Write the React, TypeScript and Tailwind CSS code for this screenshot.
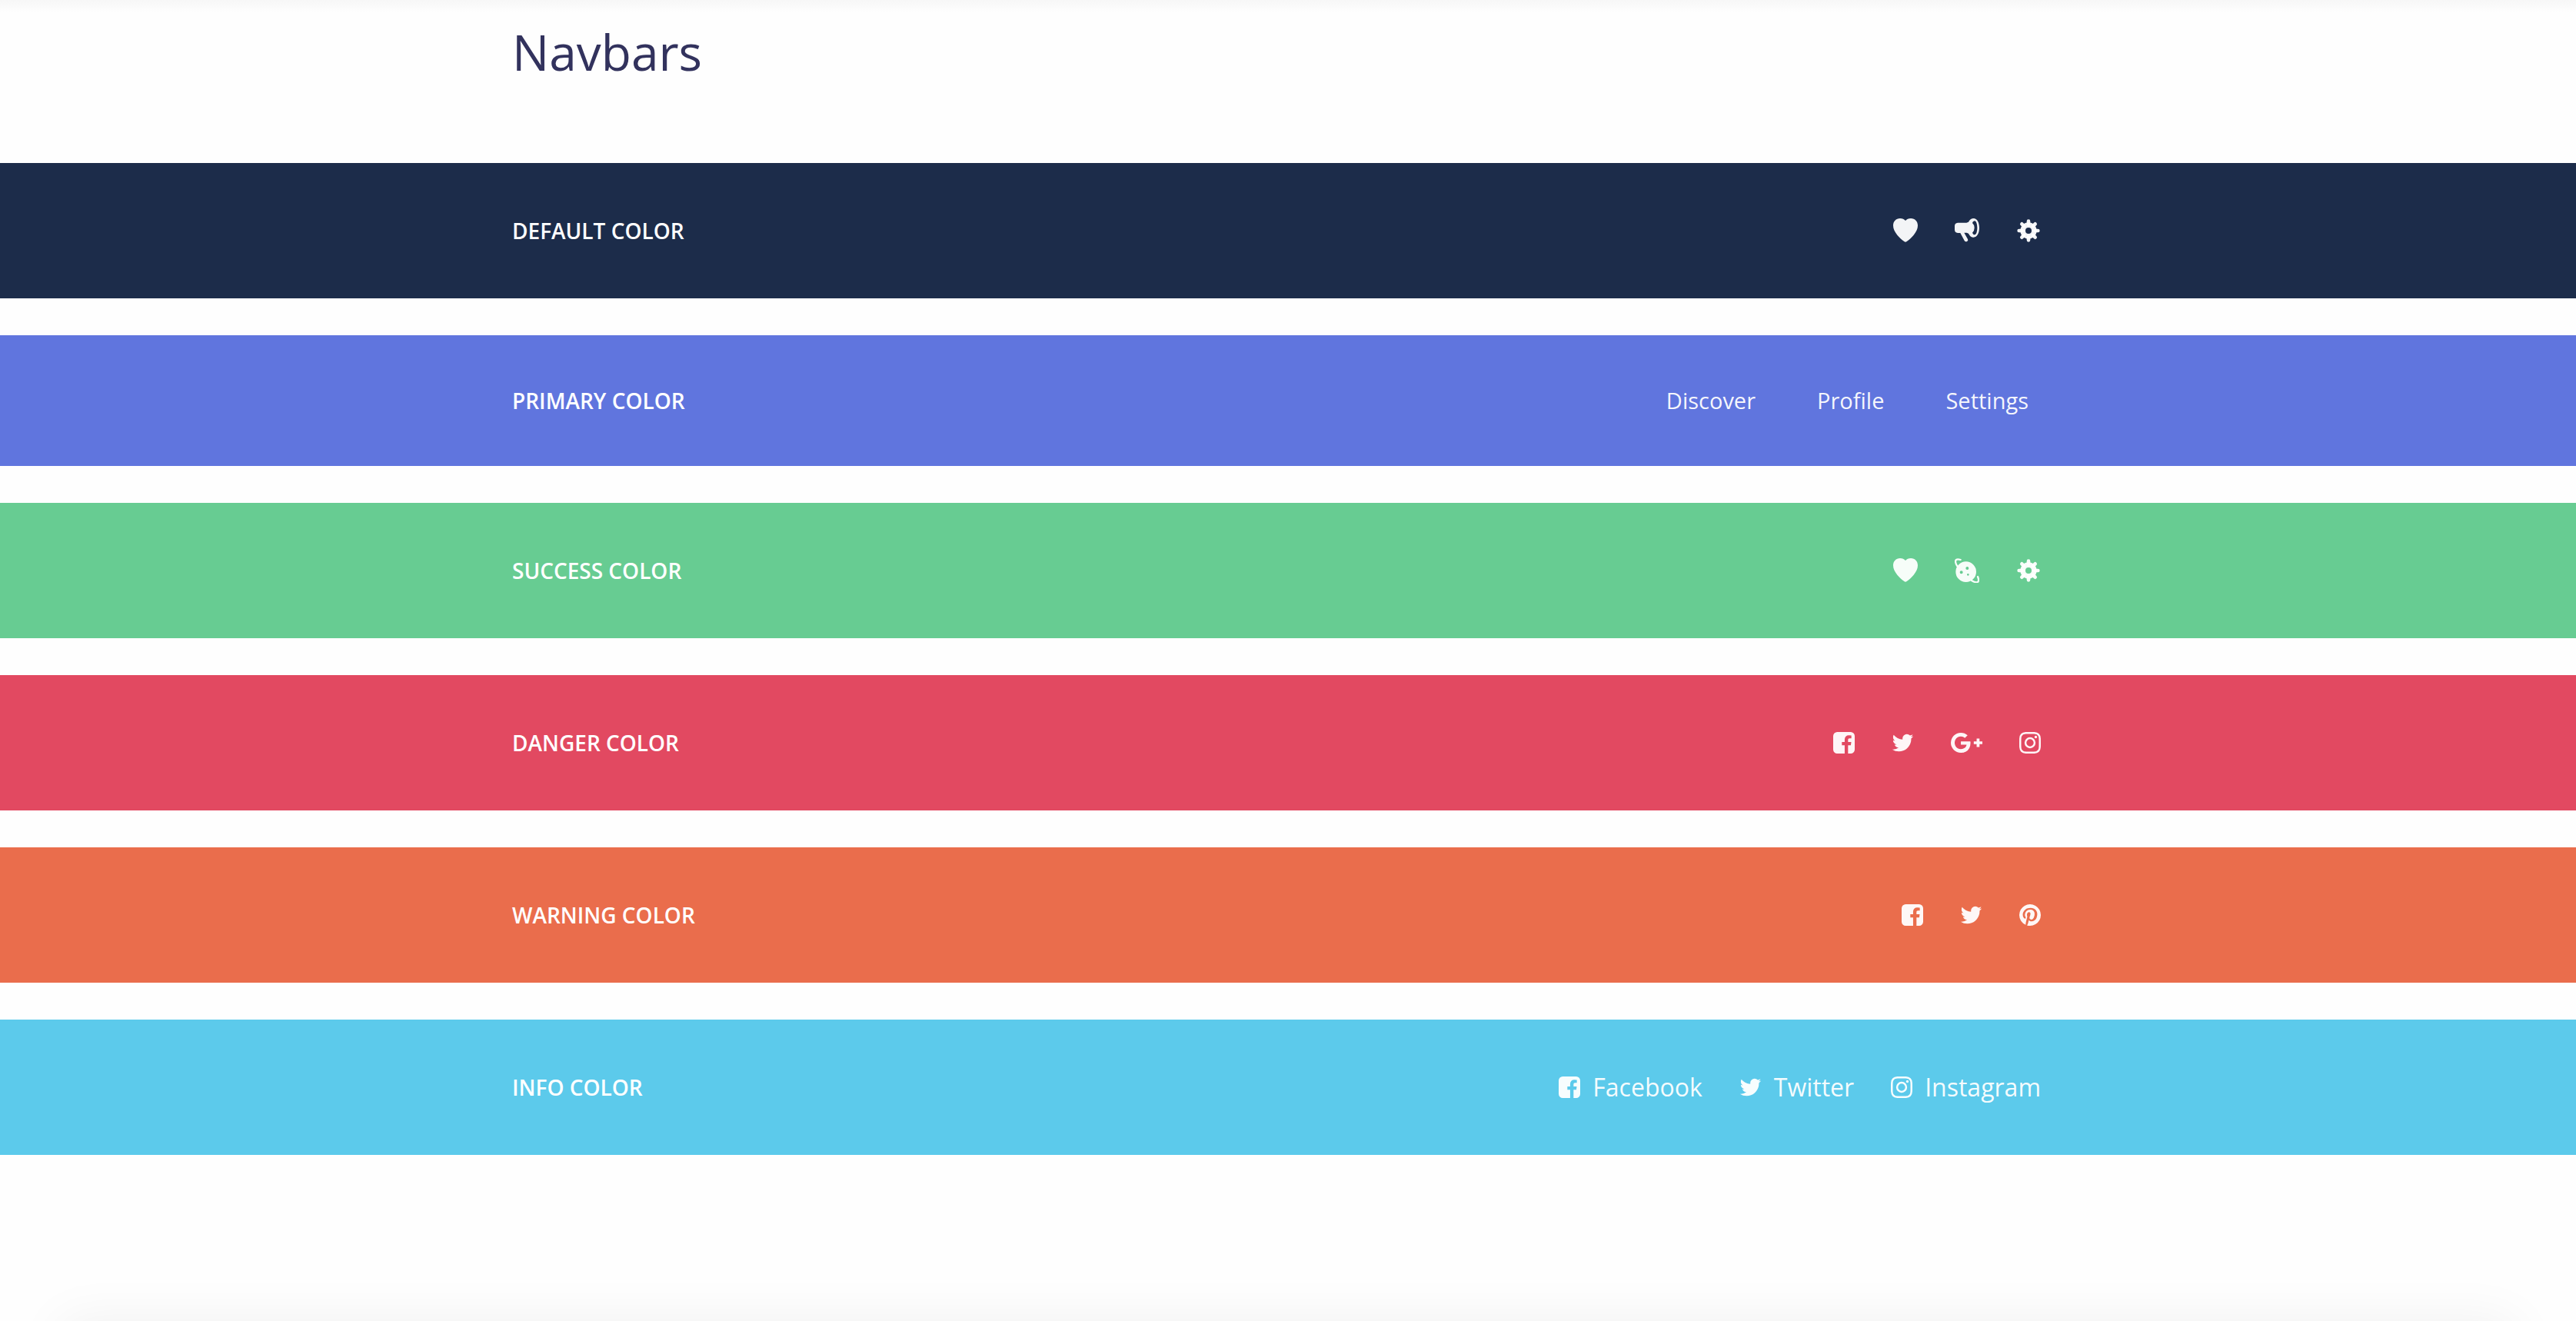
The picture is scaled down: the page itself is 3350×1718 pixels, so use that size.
import type { ReactNode } from "react";

function HeartIcon() {
  return (
    <svg viewBox="0 0 96 96" className="h-8 w-8" fill="currentColor" aria-hidden="true">
      <path d="M48 9C43 3 36 0 27 0 11 0 0 12 0 28c0 13 6 25 16 37 8 9 17 18 27 25q5 4 10 0c10-7 19-16 27-25 10-12 16-24 16-37C96 12 85 0 69 0 60 0 53 3 48 9z" />
    </svg>
  );
}

function MegaphoneIcon() {
  return (
    <svg viewBox="0 0 96 96" className="h-8 w-8" fill="currentColor" aria-hidden="true">
      <path
        fillRule="evenodd"
        d="M74 0c13 0 22 16 22 37S87 74 74 74c-9 0-16-6-20-15l-7-3H37l14 25q3 6-3 9t-10-3L22 57H12Q0 55 0 44V29Q0 18 12 17h34l8-3C58 6 65 0 74 0zM78 10c-4 0-7 3-9 8q8 7 8 19t-8 19c2 5 5 8 9 8 6 0 10-12 10-27S84 10 78 10z"
      />
    </svg>
  );
}

function GearIcon() {
  return (
    <svg viewBox="-48 -48 96 96" className="h-8 w-8" aria-hidden="true">
      <circle r="22" fill="none" stroke="currentColor" strokeWidth="20" />
      <g stroke="currentColor" strokeWidth="14" strokeLinecap="round">
        <path d="M0-25V-37M0 25V37M-25 0H-37M25 0H37M-18-18l-8-8M18 18l8 8M-18 18l-8 8M18-18l8-8" />
      </g>
    </svg>
  );
}

function PlanetIcon() {
  return (
    <svg viewBox="0 0 96 96" className="h-8 w-8" aria-hidden="true">
      <path
        fill="currentColor"
        fillRule="evenodd"
        d="M44 13a40 40 0 1 1 0 80a40 40 0 1 1 0-80zM26 49a6 6 0 1 0 0 12a6 6 0 1 0 0-12zM49 33a6 6 0 1 0 0 12a6 6 0 1 0 0-12zM52 60a4 4 0 1 0 0 8a4 4 0 1 0 0-8z"
      />
      <path
        fill="none"
        stroke="currentColor"
        strokeWidth="7"
        strokeLinecap="round"
        d="M10 31C3 21 1 10 6 6q5-4 17 0M66 87c12 7 21 9 25 5q5-5-1-20"
      />
    </svg>
  );
}

function FacebookIcon() {
  return (
    <svg viewBox="128 128 1536 1536" className="h-7 w-7" fill="currentColor" aria-hidden="true">
      <path d="M1376 128q119 0 203.5 84.5t84.5 203.5v960q0 119-84.5 203.5t-203.5 84.5h-188v-595h199l30-232h-229v-148q0-56 23.5-84t91.5-28l122-1v-207q-63-9-178-9-136 0-217.5 80t-81.5 226v171h-200v232h200v595h-532q-119 0-203.5-84.5t-84.5-203.5v-960q0-119 84.5-203.5t203.5-84.5h960z" />
    </svg>
  );
}

function TwitterIcon() {
  return (
    <svg viewBox="64 128 1664 1536" className="h-7 w-[29px]" fill="currentColor" aria-hidden="true">
      <path d="M1684 408q-67 98-162 167 1 14 1 42 0 130-38 259.5t-115.5 248.5-184.5 210.5-258 146-323 54.5q-271 0-496-145 35 4 78 4 225 0 401-138-105-2-188-64.5t-114-159.5q33 5 61 5 43 0 85-11-112-23-185.5-111.5t-73.5-205.5v-4q68 38 146 41-66-44-105-115t-39-154q0-88 44-163 121 149 294.5 238.5t371.5 99.5q-8-38-8-74 0-134 94.5-228.5t228.5-94.5q140 0 236 102 109-21 205-78-37 115-142 178 93-10 186-50z" />
    </svg>
  );
}

function GooglePlusIcon() {
  return (
    <svg viewBox="0 128 2304 1536" className="h-7 w-[41px]" fill="currentColor" aria-hidden="true">
      <path d="M1437 913q0 208-87 370.5t-248 254-369 91.5q-149 0-285-58t-234-156-156-234-58-285 58-285 156-234 234-156 285-58q286 0 491 192l-199 191q-117-113-292-113-123 0-227.5 62t-165.5 168.5-61 232.5 61 232.5 165.5 168.5 227.5 62q83 0 152.5-23t114.5-57.5 78.5-78.5 49-83 21.5-74h-416v-252h692q12 63 12 122zm867-122v210h-209v209h-210v-209h-209v-210h209v-209h210v209h209z" />
    </svg>
  );
}

function InstagramIcon() {
  return (
    <svg viewBox="128 128 1536 1536" className="h-7 w-7" fill="currentColor" aria-hidden="true">
      <path d="M1152 896q0-106-75-181t-181-75-181 75-75 181 75 181 181 75 181-75 75-181zm138 0q0 164-115 279t-279 115-279-115-115-279 115-279 279-115 279 115 115 279zm108-410q0 38-27 65t-65 27-65-27-27-65 27-65 65-27 65 27 27 65zm-502-220q-7 0-76.5-.5t-105.5 0-96.5 3-103 10-71.5 18.5q-50 20-88 58t-58 88q-11 29-18.5 71.5t-10 103-3 96.5 0 105.5.5 76.5-.5 76.5 0 105.5 3 96.5 10 103 18.5 71.5q20 50 58 88t88 58q29 11 71.5 18.5t103 10 96.5 3 105.5 0 76.5-.5 76.5.5 105.5 0 96.5-3 103-10 71.5-18.5q50-20 88-58t58-88q11-29 18.5-71.5t10-103 3-96.5 0-105.5-.5-76.5.5-76.5 0-105.5-3-96.5-10-103-18.5-71.5q-20-50-58-88t-88-58q-29-11-71.5-18.5t-103-10-96.5-3-105.5 0-76.5.5zm768 630q0 229-5 317-10 208-124 322t-322 124q-88 5-317 5t-317-5q-208-10-322-124t-124-322q-5-88-5-317t5-317q10-208 124-322t322-124q88-5 317-5t317 5q208 10 322 124t124 322q5 88 5 317z" />
    </svg>
  );
}

function PinterestIcon() {
  return (
    <svg viewBox="128 128 1536 1536" className="h-7 w-7" fill="currentColor" aria-hidden="true">
      <path d="M1664 896q0 209-103 385.5t-279.5 279.5-385.5 103q-111 0-218-32 59-93 78-164 9-34 54-211 20 39 73 67.5t114 28.5q121 0 216-68.5t147-188.5 52-270q0-114-59.5-214t-172.5-163-255-63q-105 0-196 29t-154.5 77-109 110.5-67 129.5-21.5 134q0 104 40 183t117 111q30 12 38-20 2-7 8-31t8-30q6-23-11-43-51-61-51-151 0-151 104.5-259.5t273.5-108.5q151 0 235.5 82t84.5 213q0 170-68.5 289t-175.5 119q-61 0-98-43.5t-23-104.5q8-35 26.5-93.5t30-103 11.5-75.5q0-50-27-83t-77-33q-62 0-105 57t-43 142q0 73 25 122l-99 418q-17 70-13 177-206-91-333-281t-127-423q0-209 103-385.5t279.5-279.5 385.5-103 385.5 103 279.5 279.5 103 385.5z" />
    </svg>
  );
}

type NavItem = { label: string; icon?: () => ReactNode; text?: boolean };
type Bar = { brand: string; color: string; padding: string; list: string; items: NavItem[] };

const bars: Bar[] = [
  {
    brand: "Default Color",
    color: "bg-[#1c2c4a]",
    padding: "py-16",
    list: "gap-12 pr-[30px]",
    items: [
      { label: "Favorites", icon: HeartIcon },
      { label: "Announcements", icon: MegaphoneIcon },
      { label: "Settings", icon: GearIcon },
    ],
  },
  {
    brand: "Primary Color",
    color: "bg-[#6075de]",
    padding: "py-[61px]",
    list: "gap-20 pr-[46px]",
    items: [
      { label: "Discover", text: true },
      { label: "Profile", text: true },
      { label: "Settings", text: true },
    ],
  },
  {
    brand: "Success Color",
    color: "bg-[#67cc92]",
    padding: "py-16",
    list: "gap-12 pr-[30px]",
    items: [
      { label: "Favorites", icon: HeartIcon },
      { label: "Explore", icon: PlanetIcon },
      { label: "Settings", icon: GearIcon },
    ],
  },
  {
    brand: "Danger Color",
    color: "bg-[#e24961]",
    padding: "py-16",
    list: "gap-12 pr-[30px]",
    items: [
      { label: "Facebook", icon: FacebookIcon },
      { label: "Twitter", icon: TwitterIcon },
      { label: "Google Plus", icon: GooglePlusIcon },
      { label: "Instagram", icon: InstagramIcon },
    ],
  },
  {
    brand: "Warning Color",
    color: "bg-[#ea6d4c]",
    padding: "py-16",
    list: "gap-12 pr-[30px]",
    items: [
      { label: "Facebook", icon: FacebookIcon },
      { label: "Twitter", icon: TwitterIcon },
      { label: "Pinterest", icon: PinterestIcon },
    ],
  },
  {
    brand: "Info Color",
    color: "bg-[#5ccaeb]",
    padding: "py-16",
    list: "gap-12 pr-[30px]",
    items: [
      { label: "Facebook", icon: FacebookIcon, text: true },
      { label: "Twitter", icon: TwitterIcon, text: true },
      { label: "Instagram", icon: InstagramIcon, text: true },
    ],
  },
];

function NavLink({ item }: { item: NavItem }) {
  const Icon = item.icon;
  const size = Icon ? "text-[32px]" : "text-[29px]";
  return (
    <a
      href="#"
      aria-label={item.text ? undefined : item.label}
      className={`flex items-center gap-4 leading-[48px] text-white/95 ${size}`}
    >
      {Icon && <Icon />}
      {item.text && <span>{item.label}</span>}
    </a>
  );
}

function Navbar({ bar }: { bar: Bar }) {
  return (
    <nav aria-label={bar.brand} className={`${bar.color} ${bar.padding}`}>
      <div className="mx-auto flex max-w-[2018px] items-center justify-between">
        <a href="#" className="text-[28px] leading-[48px] font-semibold text-white uppercase">
          {bar.brand}
        </a>
        <ul className={`flex items-center ${bar.list}`}>
          {bar.items.map((item) => (
            <li key={item.label}>
              <NavLink item={item} />
            </li>
          ))}
        </ul>
      </div>
    </nav>
  );
}

export default function App() {
  return (
    <main className="flex min-h-screen flex-col bg-[#fefefe] font-['Open_Sans',sans-serif]">
      <header className="bg-linear-to-b from-[#f7f7f7] to-[#fefefe] to-[16px] pt-5 pb-24">
        <h2 className="mx-auto max-w-[2018px] text-[64px] leading-[96px] text-[#32325d]">Navbars</h2>
      </header>
      <div className="flex flex-col gap-12">
        {bars.map((bar) => (
          <Navbar key={bar.brand} bar={bar} />
        ))}
      </div>
      <div className="mt-auto flex h-16 flex-col justify-end overflow-hidden px-20">
        <div className="-mb-64 h-64 shrink-0 shadow-[0_0_64px_0_rgba(0,0,0,0.06)]" />
      </div>
    </main>
  );
}
